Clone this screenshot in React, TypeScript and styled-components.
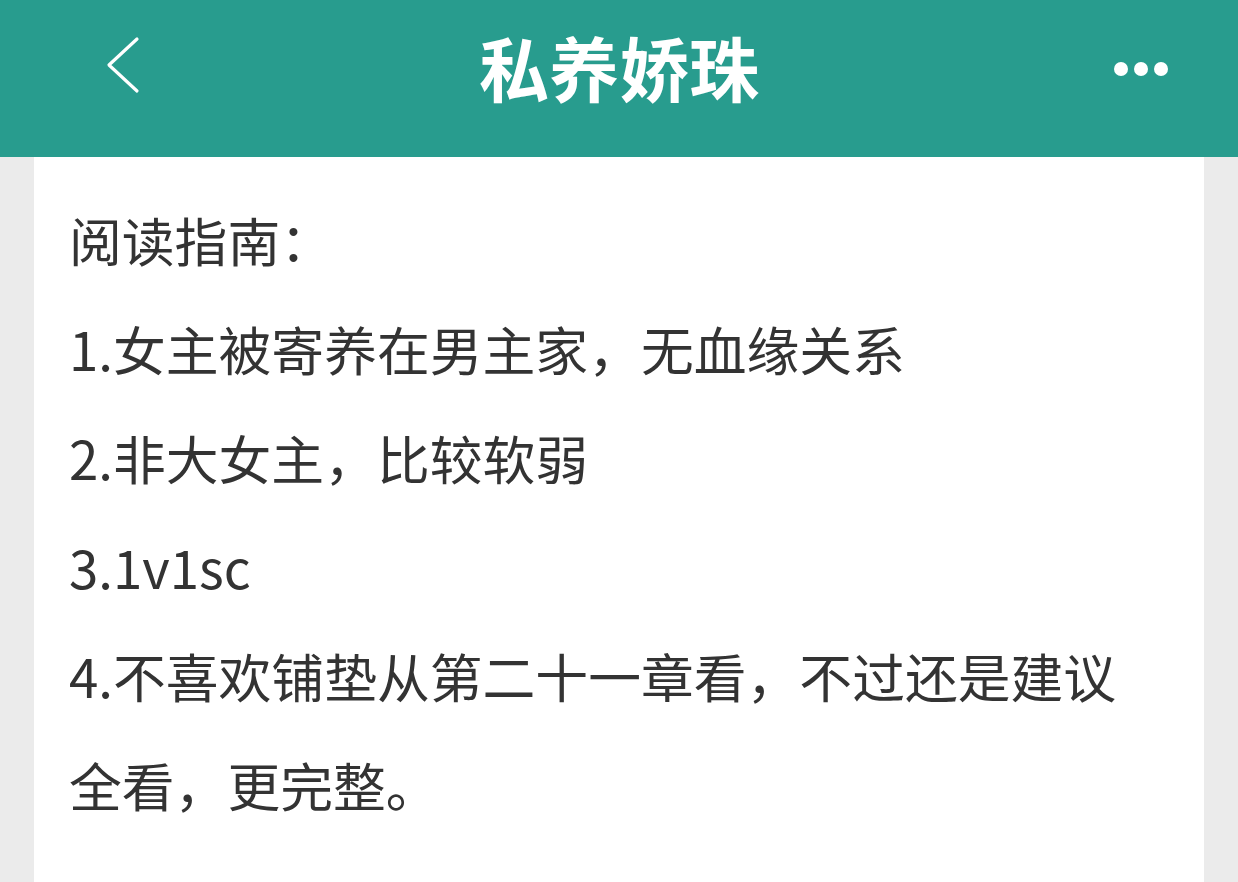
import React from "react";
import styled, { createGlobalStyle } from "styled-components";

const Global = createGlobalStyle`
  html, body {
    margin: 0;
    padding: 0;
    background: #ebebeb;
    font-family: "Noto Sans CJK SC", "Noto Sans", sans-serif;
  }
`;

const Page = styled.div`
  width: 1238px;
  height: 882px;
  overflow: hidden;
  display: flex;
  flex-direction: column;
  background: #ebebeb;
`;

const Header = styled.header`
  height: 157px;
  flex: 0 0 157px;
  box-sizing: border-box;
  background: #289c8e;
  display: grid;
  grid-template-columns: 1fr auto 1fr;
  align-items: center;
  padding: 0 70px 24px 70px;
`;

const BackButton = styled.button`
  justify-self: start;
  margin: 0 0 4px 36px;
  background: none;
  border: none;
  padding: 0;
  width: 34px;
  height: 58px;
  display: flex;
  align-items: center;
  cursor: pointer;
`;

const Title = styled.h1`
  margin: 0;
  color: #fff;
  font-size: 70px;
  font-weight: 700;
  line-height: 1;
  letter-spacing: 0;
`;

const MoreButton = styled.button`
  justify-self: end;
  margin-top: 4px;
  background: none;
  border: none;
  padding: 0;
  display: flex;
  gap: 6px;
  cursor: pointer;
`;

const Dot = styled.span`
  width: 14px;
  height: 14px;
  border-radius: 50%;
  background: #fff;
`;

const Body = styled.main`
  flex: 1;
  padding: 0 34px;
  display: flex;
`;

const Card = styled.article`
  flex: 1;
  background: #fff;
  padding: 28px 50px 0 35px;
  box-sizing: border-box;
`;

const Line = styled.p`
  margin: 0;
  color: #333;
  font-size: 52.8px;
  line-height: 109px;
`;

const lines = [
  "阅读指南：",
  "1.女主被寄养在男主家，无血缘关系",
  "2.非大女主，比较软弱",
  "3.1v1sc",
  "4.不喜欢铺垫从第二十一章看，不过还是建议全看，更完整。",
];

export default function App() {
  return (
    <Page>
      <Global />
      <Header>
        <BackButton aria-label="返回">
          <svg width="34" height="58" viewBox="0 0 34 58">
            <path
              d="M31 3 L3 29 L31 55"
              fill="none"
              stroke="#fff"
              strokeWidth="3.2"
              strokeLinecap="round"
              strokeLinejoin="round"
            />
          </svg>
        </BackButton>
        <Title>私养娇珠</Title>
        <MoreButton aria-label="更多">
          <Dot />
          <Dot />
          <Dot />
        </MoreButton>
      </Header>
      <Body>
        <Card>
          {lines.map((t) => (
            <Line key={t}>{t}</Line>
          ))}
        </Card>
      </Body>
    </Page>
  );
}
